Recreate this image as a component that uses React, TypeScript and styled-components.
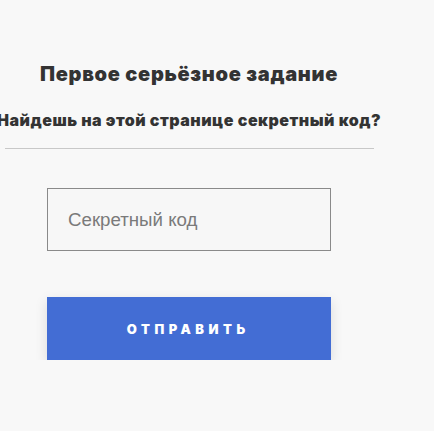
import styled, { createGlobalStyle } from "styled-components";

const GlobalStyle = createGlobalStyle`
  html, body {
    margin: 0;
    padding: 0;
    background: #f8f8f8;
  }
  body {
    font-family: "Inter", "Liberation Sans", sans-serif;
  }
`;

const Page = styled.div`
  width: 378px;
  padding-top: 61px;
  display: flex;
  flex-direction: column;
  align-items: center;
`;

const Title = styled.h1`
  margin: 0;
  font-size: 20px;
  line-height: 26px;
  font-weight: 900;
  letter-spacing: 0.7px;
  color: #333;
  white-space: nowrap;
`;

const Subtitle = styled.h2`
  margin: 23px 0 0;
  font-size: 16px;
  line-height: 20px;
  font-weight: 900;
  letter-spacing: 0.5px;
  color: #333;
  white-space: nowrap;
`;

const Divider = styled.hr`
  width: 369px;
  margin: 18px 0 0 1px;
  border: 0;
  border-top: 1px solid #c8c8c8;
`;

const Form = styled.form`
  width: 284px;
  margin-top: 39px;
  display: flex;
  flex-direction: column;
  gap: 46px;
`;

const Input = styled.input`
  box-sizing: border-box;
  width: 100%;
  height: 63px;
  padding: 0 20px;
  border: 1px solid #8a8a8a;
  background: #f7f7f7;
  font-family: "Liberation Sans", Arial, sans-serif;
  font-size: 18.7px;
  color: #333;
  outline: none;
  &::placeholder {
    color: #7a7a7a;
  }
`;

const Submit = styled.button`
  width: 100%;
  height: 63px;
  border: 0;
  background: #436dd4;
  box-shadow: 0 4px 12px rgba(0, 0, 0, 0.12);
  color: #fff;
  font-family: "Inter", sans-serif;
  font-weight: 900;
  font-size: 13px;
  letter-spacing: 4.5px;
  padding-left: 4.5px;
  cursor: pointer;
`;

export default function App() {
  return (
    <>
      <GlobalStyle />
      <Page>
        <Title>Первое серьёзное задание</Title>
        <Subtitle>Найдешь на этой странице секретный код?</Subtitle>
        <Divider />
        <Form onSubmit={(e) => e.preventDefault()}>
          <Input placeholder="Секретный код" />
          <Submit type="submit">ОТПРАВИТЬ</Submit>
        </Form>
      </Page>
    </>
  );
}
